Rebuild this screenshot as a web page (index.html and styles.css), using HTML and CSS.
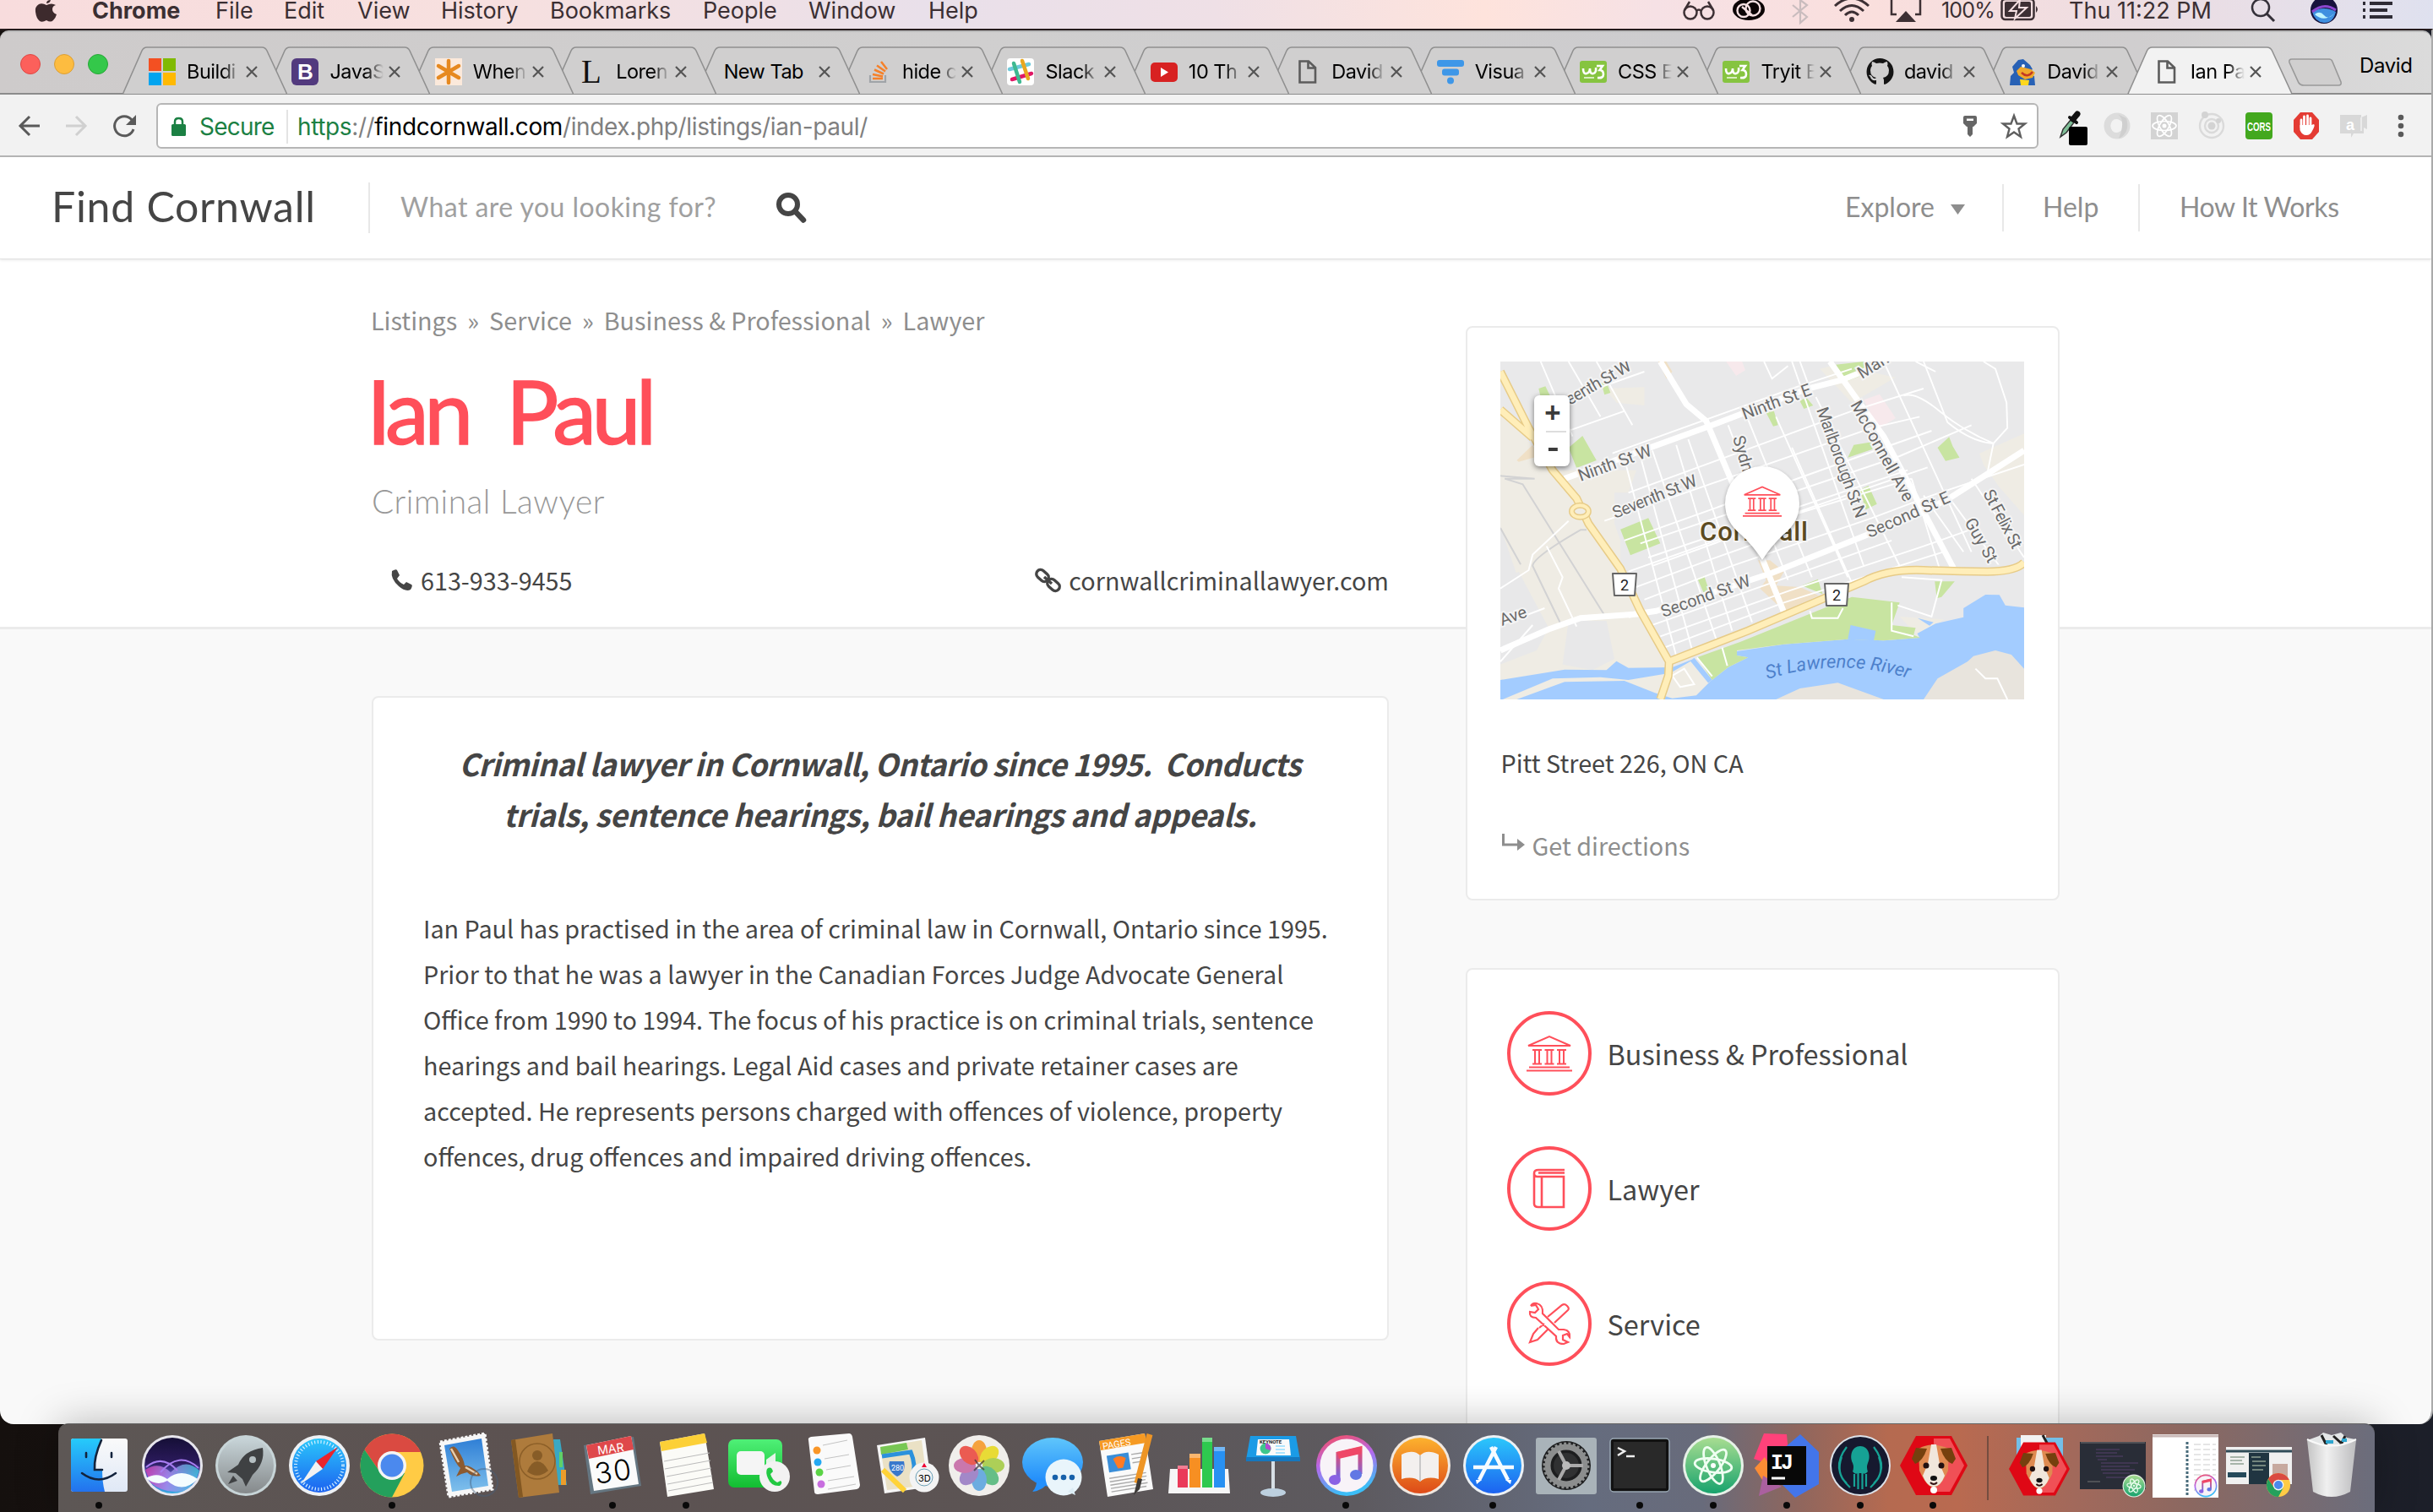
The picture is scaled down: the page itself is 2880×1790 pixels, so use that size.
FILE: index.html
```html
<!DOCTYPE html>
<html lang="en">
<head>
<meta charset="utf-8">
<title>Ian Paul</title>
<link rel="stylesheet" href="styles.css">
</head>
<body>
<svg class="defs" width="0" height="0">
  <defs>
    <symbol id="tab" viewBox="0 0 195 57"><path d="M.5 56 23 5Q25 1 29 1H165Q169 1 171 5L194.5 56" stroke="#909090" stroke-width="1.6"/></symbol>
    <symbol id="x" viewBox="0 0 16 16"><path d="M2 2 14 14M14 2 2 14" stroke="#555" stroke-width="2.2" fill="none"/></symbol>
    <symbol id="doc" viewBox="0 0 32 32"><path d="M7.500 3.500H18L26 11V28.500H7.500zM17.500 4V11.500H25.500" fill="none" stroke="#5c5c5c" stroke-width="2.600"/></symbol>
    <symbol id="w3" viewBox="0 0 32 32"><rect y="3" width="32" height="26" rx="3" fill="#86c440"/><path d="M4 12Q4 19 8 18T12 12Q12 19 16 18T19 11" fill="none" stroke="#fff" stroke-width="2.600"/><path d="M20 9H27L23.500 14Q28 14 28 19T21 23" fill="none" stroke="#fff" stroke-width="2.600"/><path d="M5 23H17" stroke="#d7edbd" stroke-width="2"/></symbol>
    <symbol id="bank" viewBox="0 0 54 44"><path d="M2 13 27 2 52 13zM3 38.500H51M0 42.500H54M7 18H18M21.500 18H32.500M36 18H47M7 34.500H18M21.500 34.500H32.500M36 34.500H47M10 18V34M15 18V34M24.500 18V34M29.500 18V34M39 18V34M44 18V34" fill="none" stroke="#ff4f5a" stroke-width="2"/></symbol>
    <symbol id="chrome" viewBox="-40 -40 80 80"><circle r="37.500" fill="#ffcb45"/><path d="M-32.500-18.700A37.500 37.500 0 0 1 34-16H0L-14 8z" fill="#da4a41"/><path d="M-32.500-18.700A37.500 37.500 0 0 0 0 37.500L15 9-14 8z" fill="#24a05c"/><circle r="17" fill="#f5f5f5"/><circle r="13.500" fill="#4b89ee"/></symbol>
    <symbol id="itunes" viewBox="-40 -40 80 80"><circle r="36" fill="url(#itg)"/><circle r="31.500" fill="#f8f3f8"/><path d="M-10 16V-14L16-20V10" fill="none" stroke="url(#notes)" stroke-width="5"/><path d="M-10-12 16-18" stroke="#ef4767" stroke-width="8"/><ellipse cx="-14" cy="17" rx="7" ry="6" fill="#8a62e4"/><ellipse cx="11" cy="11" rx="7" ry="6" fill="#6277e4"/></symbol>
    <symbol id="atom" viewBox="-40 -40 80 80"><circle r="36" fill="#e7f1e8"/><circle r="33" fill="url(#atg)"/><g fill="none" stroke="#effff2" stroke-width="2.800"><ellipse rx="8" ry="23" transform="rotate(-22)"/><ellipse rx="8" ry="23" transform="rotate(38)"/><ellipse rx="8" ry="22" transform="rotate(98)"/></g><circle r="3" fill="#fff"/></symbol>
    <symbol id="dog" viewBox="-40 -40 80 80"><path d="M-21-35H21L40 0 21 35H-21L-40 0z" fill="#df0815"/><path d="M0-32H19L36 0 19 31H0z" fill="#f05056"/><path d="M-18-20Q-3-29 18-20L17 6Q8 26 0 26T-17 6z" fill="#df8a51"/><path d="M-3-25H3L7-2 13 12Q8 25 0 25T-13 12L-7-2z" fill="#f1e7dc"/><path d="M-21-21-8-20Q-13-5-22-2L-26-8zM21-21 8-20Q13-5 22-2L26-8z" fill="#75400e"/><circle cx="-9" cy="0" r="3.500" fill="#211"/><circle cx="9" cy="0" r="3.500" fill="#211"/><ellipse cy="15" rx="4" ry="3" fill="#111"/><path d="M-4 20Q0 24 4 20" stroke="#311" fill="none" stroke-width="2"/><circle cy="29" r="4" fill="#fff"/></symbol>
    <linearGradient id="itg" x1="0" y1="0" x2=".3" y2="1"><stop stop-color="#fb4b55"/><stop offset=".5" stop-color="#b569ed"/><stop offset="1" stop-color="#3bbef7"/></linearGradient>
    <linearGradient id="notes" x1="0" y1="0" x2="0" y2="1"><stop stop-color="#f24963"/><stop offset="1" stop-color="#7068e6"/></linearGradient>
    <linearGradient id="atg" x1="0" y1="0" x2="0" y2="1"><stop stop-color="#a8dd91"/><stop offset="1" stop-color="#18a36d"/></linearGradient>
    <linearGradient id="fin" x1="0" y1="0" x2="0" y2="1"><stop stop-color="#26cbfb"/><stop offset="1" stop-color="#2372ee"/></linearGradient>
    <linearGradient id="finr" x1="0" y1="0" x2="0" y2="1"><stop stop-color="#fafafa"/><stop offset="1" stop-color="#dfe8f6"/></linearGradient>
    <linearGradient id="siri" x1="0" y1="0" x2="0" y2="1"><stop stop-color="#150f36"/><stop offset=".45" stop-color="#2b1a5c"/><stop offset=".7" stop-color="#5b5fd0"/><stop offset="1" stop-color="#35a9df"/></linearGradient>
    <linearGradient id="wave" x1="0" y1="0" x2="1" y2="0"><stop stop-color="#e23fb4"/><stop offset=".4" stop-color="#b48af0"/><stop offset="1" stop-color="#3cd3e0"/></linearGradient>
    <linearGradient id="grey" x1="0" y1="0" x2="0" y2="1"><stop stop-color="#c8d5d9"/><stop offset="1" stop-color="#85898b"/></linearGradient>
    <linearGradient id="blue" x1="0" y1="0" x2="0" y2="1"><stop stop-color="#2bc7fb"/><stop offset="1" stop-color="#1c62f0"/></linearGradient>
    <linearGradient id="msg" x1="0" y1="0" x2="0" y2="1"><stop stop-color="#5fc6fb"/><stop offset="1" stop-color="#1a86fb"/></linearGradient>
    <linearGradient id="sky" x1="0" y1="0" x2="0" y2="1"><stop stop-color="#2f7fd6"/><stop offset="1" stop-color="#7fc0ec"/></linearGradient>
    <linearGradient id="orange" x1="0" y1="0" x2="0" y2="1"><stop stop-color="#fdb22e"/><stop offset="1" stop-color="#dd4a18"/></linearGradient>
    <linearGradient id="green" x1="0" y1="0" x2="0" y2="1"><stop stop-color="#4ff077"/><stop offset="1" stop-color="#12bd31"/></linearGradient>
    <linearGradient id="trash" x1="0" y1="0" x2="1" y2="0"><stop stop-color="#c4c4c4"/><stop offset=".4" stop-color="#f0f0f0"/><stop offset="1" stop-color="#bdbdbf"/></linearGradient>
  </defs>
</svg>

<header class="menubar">
  <svg class="apple" width="28" height="30" viewBox="0 0 28 30"><path d="M19 0Q14 0 14 4 18 4 19 0M14 6Q9 3 5 5 0 8 1 14 2 22 6 25 9 27 14 24 19 27 22 24 25 21 26 17 21 15 21 11T25 6Q20 3 14 6" fill="#3d2a2d"/></svg>
  <nav class="menus"><b class="m1">Chrome</b><span class="m2">File</span><span class="m3">Edit</span><span class="m4">View</span><span class="m5">History</span><span class="m6">Bookmarks</span><span class="m7">People</span><span class="m8">Window</span><span class="m9">Help</span></nav>
  <div class="status">
    <svg class="s-glasses" width="40" height="34" viewBox="0 0 40 34"><g fill="none" stroke="#3d3034" stroke-width="2.500"><circle cx="10" cy="15" r="7.500"/><circle cx="30" cy="15" r="7.500"/><path d="M17 13Q20 10 23 13M3 12 9 2M37 12 31 2"/></g></svg>
    <svg class="s-cc" width="40" height="34" viewBox="0 0 40 34"><ellipse cx="20" cy="11" rx="19" ry="13" fill="#0c0405"/><g fill="none" stroke="#f6e0e2" stroke-width="2.400"><circle cx="14" cy="12.500" r="7.500"/><circle cx="25" cy="10" r="8.500"/><path d="M12 8 24 18"/></g></svg>
    <svg class="s-bt" width="22" height="34" viewBox="0 0 22 34"><path d="M2 6 19 20 11 27V0L19 6 2 20" fill="none" stroke="#c9bcbe" stroke-width="2.200"/></svg>
    <svg class="s-wifi" width="44" height="34" viewBox="0 0 44 34"><g fill="none" stroke="#3d3034" stroke-width="3"><path d="M2 7Q22-11 42 7M8 13Q22 0 36 13M14 18Q22 10 30 18"/></g><circle cx="22" cy="23" r="3" fill="#3d3034"/></svg>
    <svg class="s-air" width="38" height="34" viewBox="0 0 38 34"><path d="M8 17H2V0M30 17H36V0" fill="none" stroke="#3d3034" stroke-width="2.500"/><path d="M19 13 31 26H7z" fill="#3d3034"/></svg>
    <span class="s-pct">100%</span>
    <svg class="s-bat" width="46" height="34" viewBox="0 0 46 34"><rect x="1.500" y="-1" width="38" height="24" rx="4" fill="none" stroke="#3d3034" stroke-width="2.500"/><rect x="5" y="2" width="31" height="18" rx="2" fill="#3d3034"/><path d="M23 0 11 13H19L17 22 31 9H22z" fill="#3d3034" stroke="#f6e1e3" stroke-width="2"/><path d="M42 7Q46 11 42 15z" fill="#3d3034"/></svg>
    <span class="s-time">Thu 11:22 PM</span>
    <svg class="s-find" width="30" height="34" viewBox="0 0 30 34"><circle cx="12" cy="9" r="10" fill="none" stroke="#343039" stroke-width="2.500"/><path d="M19 16 28 25" stroke="#343039" stroke-width="3"/></svg>
    <svg class="s-siri" width="34" height="34" viewBox="0 0 34 34"><circle cx="17" cy="12" r="16" fill="#17123c"/><path d="M3 14Q17 6 31 14 28 27 17 27 6 26 3 14" fill="#3f8fe0"/><path d="M3 14Q17 2 31 12" stroke="#8b46cd" stroke-width="3" fill="none"/><path d="M6 17Q12 12 17 18T29 16Q17 27 6 17" fill="#bff4ff"/></svg>
    <svg class="s-list" width="38" height="34" viewBox="0 0 38 34"><path d="M2 4H5M10 4H37M2 12H5M10 12H31M2 20H5M10 20H37" stroke="#2e2b35" stroke-width="4"/></svg>
  </div>
</header>

<div class="window">
  <div class="tabstrip">
    <div class="lights"><i class="red"></i><i class="yellow"></i><i class="green"></i></div>
    <div class="tabs">
      <div class="tab"><svg class="shape"><use href="#tab"/></svg><svg class="fav" viewBox="0 0 32 32"><path d="M0 0H15V15H0z" fill="#f35022"/><path d="M17 0H32V15H17z" fill="#80ba02"/><path d="M0 17H15V32H0z" fill="#02a4ef"/><path d="M17 17H32V32H17z" fill="#ffb902"/></svg><span>Buildi</span><svg class="close"><use href="#x"/></svg></div>
      <div class="tab"><svg class="shape"><use href="#tab"/></svg><svg class="fav" viewBox="0 0 32 32"><rect width="32" height="32" rx="6" fill="#523a7e"/><text x="7" y="25" font-family="Liberation Sans" font-weight="700" font-size="26" fill="#fff">B</text></svg><span>JavaS</span><svg class="close"><use href="#x"/></svg></div>
      <div class="tab"><svg class="shape"><use href="#tab"/></svg><svg class="fav" viewBox="0 0 32 32"><rect width="32" height="32" fill="#fbe9db"/><path d="M16 3V29M4 9 28 23M28 9 4 23" stroke="#e68920" stroke-width="4.500" stroke-linecap="round"/></svg><span>When</span><svg class="close"><use href="#x"/></svg></div>
      <div class="tab"><svg class="shape"><use href="#tab"/></svg><svg class="fav" viewBox="0 0 32 32"><text x="4" y="29" font-family="Liberation Serif" font-size="39" fill="#111">L</text></svg><span>Loren</span><svg class="close"><use href="#x"/></svg></div>
      <div class="tab newtab"><svg class="shape"><use href="#tab"/></svg><span>New Tab</span><svg class="close"><use href="#x"/></svg></div>
      <div class="tab"><svg class="shape"><use href="#tab"/></svg><svg class="fav" viewBox="0 0 32 32"><path d="M7 20V28H25V20" fill="none" stroke="#a0a4a8" stroke-width="2.200"/><path d="M10 24H22M10 19 22 21.500M12 13.500 23 18.500M15 8.500 25 15.500M20 4 27 13" stroke="#f5812a" stroke-width="2.500"/></svg><span>hide c</span><svg class="close"><use href="#x"/></svg></div>
      <div class="tab"><svg class="shape"><use href="#tab"/></svg><svg class="fav" viewBox="0 0 32 32"><rect width="32" height="32" rx="4" fill="#fff"/><g stroke-width="4.500" stroke-linecap="round"><path d="M3 13 26 7" stroke="#6ecadc"/><path d="M6 25 29 18" stroke="#e01765"/><path d="M8 6 15 28" stroke="#3eb991"/><path d="M18 3 25 24" stroke="#e9a820"/></g></svg><span>Slack</span><svg class="close"><use href="#x"/></svg></div>
      <div class="tab"><svg class="shape"><use href="#tab"/></svg><svg class="fav" viewBox="0 0 32 32"><rect y="5" width="32" height="23" rx="5" fill="#d82222"/><path d="M12 11 21 16.500 12 22z" fill="#fff"/></svg><span>10 Th</span><svg class="close"><use href="#x"/></svg></div>
      <div class="tab"><svg class="shape"><use href="#tab"/></svg><svg class="fav"><use href="#doc"/></svg><span>David</span><svg class="close"><use href="#x"/></svg></div>
      <div class="tab"><svg class="shape"><use href="#tab"/></svg><svg class="fav" viewBox="0 0 32 32"><rect y="2" width="32" height="8" rx="3" fill="#3e97e8"/><rect x="6" y="12.500" width="20" height="8" rx="3" fill="#3e97e8"/><circle cx="16" cy="26.500" r="4" fill="#3e97e8"/></svg><span>Visua</span><svg class="close"><use href="#x"/></svg></div>
      <div class="tab"><svg class="shape"><use href="#tab"/></svg><svg class="fav"><use href="#w3"/></svg><span>CSS E</span><svg class="close"><use href="#x"/></svg></div>
      <div class="tab"><svg class="shape"><use href="#tab"/></svg><svg class="fav"><use href="#w3"/></svg><span>Tryit E</span><svg class="close"><use href="#x"/></svg></div>
      <div class="tab"><svg class="shape"><use href="#tab"/></svg><svg class="fav" viewBox="0 0 32 32"><path d="M16 0A16 16 0 0 0 11 31Q12 31 12 29V26Q6 27 5 22L3 20Q6 19 8 23 10 25 12 23 5 22 5 14 5 11 7 9 6 7 7 4 9 4 12 6 16 5 20 6 23 4 25 4 26 7 25 9 27 11 27 14 27 22 20 23 21 25 21 26V30Q21 31 22 31A16 16 0 0 0 16 0" fill="#141414"/></svg><span>david</span><svg class="close"><use href="#x"/></svg></div>
      <div class="tab"><svg class="shape"><use href="#tab"/></svg><svg class="fav" viewBox="0 0 32 32"><path d="M11 2 17 1 25 8 28 13 23 16 17 17 30 21 31 32H1L2 21 6 17 4 10z" fill="#2861b5"/><path d="M14 10 26 13 31 17 28 23 19 25 11 20 9 15z" fill="#f0a92c"/><path d="M15 17Q22 24 28 16" stroke="#c33824" stroke-width="2.500" fill="none"/><path d="M13 25 24 26 23 32H14z" fill="#ffd71d"/><circle cx="17" cy="9" r="2" fill="#fff"/></svg><span>David</span><svg class="close"><use href="#x"/></svg></div>
      <div class="tab active"><svg class="shape"><use href="#tab"/></svg><svg class="fav"><use href="#doc"/></svg><span>Ian Pa</span><svg class="close"><use href="#x"/></svg></div>
    </div>
    <svg class="add" width="68" height="36" viewBox="0 0 68 36"><path d="M6 2H50Q53 2 54 5L64 29Q65 33 61 33H20Q16 33 14 30L3 6Q2 2 6 2" fill="#d0cfcf" stroke="#999" stroke-width="1.600"/></svg>
    <span class="profile">David</span>
  </div>
  <div class="toolbar">
    <svg width="172" height="56" viewBox="0 0 172 56" fill="none" stroke-width="3"><path d="M47 27H24M35 16 24 27 35 38" stroke="#5a5a5a"/><path d="M78 27H101M90 16 101 27 90 38" stroke="#d0d0d0"/><path d="M156 20A11.500 11.500 0 1 0 158 31" stroke="#5a5a5a"/><path d="M161 14V26H149z" fill="#5a5a5a"/></svg>
    <div class="omnibox">
      <svg width="17" height="24" viewBox="0 0 17 24"><rect y="9" width="17" height="14" rx="1.500" fill="#1b8043"/><path d="M4 10V6Q4 2 8.500 2T13 6V10" fill="none" stroke="#1b8043" stroke-width="2.500"/></svg>
      <span class="secure">Secure</span><i class="sep"></i>
      <span class="url"><em class="https">https</em>://<em class="host">findcornwall.com</em>/index.php/listings/ian-paul/</span>
      <svg class="key" width="18" height="28" viewBox="0 0 18 28"><path d="M1 3Q1 1 3 1H15Q17 1 17 3V10L13 14H12V23L9 26 6 23V14H5L1 10z" fill="#666"/><path d="M5 4.500H13V7H5z" fill="#fff"/></svg>
      <svg class="star" width="30" height="30" viewBox="0 0 30 30"><path d="M15 2 18.500 11.500H28L20.500 17.500 23 27 15 21.500 7 27 9.500 17.500 2 11.500H11.500z" fill="none" stroke="#5f5f5f" stroke-width="2.400"/></svg>
    </div>
    <div class="exts">
      <svg viewBox="0 0 40 44"><path d="M9 33 12 24 21 13 25 16 16 28z" fill="#7fbf98" stroke="#333" stroke-width="1.500"/><path d="M20 10 28 16" stroke="#111" stroke-width="4" stroke-linecap="round"/><path d="M24 12 29 6" stroke="#111" stroke-width="7" stroke-linecap="round"/><rect x="19" y="21" width="22" height="22" rx="2" fill="#000"/></svg>
      <svg viewBox="0 0 40 44"><circle cx="20" cy="20" r="11.500" fill="none" stroke="#dcdcdc" stroke-width="8"/><path d="M18 5Q32 10 22 35 36 28 31 11z" fill="#cfcfcf"/><ellipse cx="19" cy="20" rx="6.500" ry="8" fill="#f2f2f2"/></svg>
      <svg viewBox="0 0 40 44"><rect x="4" y="4" width="32" height="32" fill="#d3d3d3"/><g fill="none" stroke="#fff" stroke-width="1.700"><ellipse cx="20" cy="20" rx="14" ry="5.500"/><ellipse cx="20" cy="20" rx="14" ry="5.500" transform="rotate(60 20 20)"/><ellipse cx="20" cy="20" rx="14" ry="5.500" transform="rotate(120 20 20)"/></g><circle cx="20" cy="20" r="2.500" fill="#fff"/></svg>
      <svg viewBox="0 0 40 44"><g fill="none" stroke="#dadada" stroke-width="2.400"><circle cx="20" cy="20" r="14"/><circle cx="20" cy="20" r="8"/></g><circle cx="20" cy="20" r="4.500" fill="#d3d3d3"/><circle cx="12" cy="7" r="4" fill="#d3d3d3"/><circle cx="28" cy="14" r="3" fill="#d3d3d3"/></svg>
      <svg viewBox="0 0 40 44"><rect x="4" y="4" width="32" height="32" rx="4" fill="#43a81e"/><text x="6" y="25.500" font-family="Liberation Sans" font-weight="700" font-size="15" textLength="28" lengthAdjust="spacingAndGlyphs" fill="#fff">CORS</text></svg>
      <svg viewBox="0 0 40 44"><path d="M13 4H27L35 13V27L27 36H13L5 27V13z" fill="#e43b33"/><path d="M14 22V13M17.500 21V9M21.500 21V8M25 21V11" stroke="#fff" stroke-width="2.800" stroke-linecap="round"/><path d="M12.500 19H26L29 18Q31 19 27 26 25 31 20 31T12.500 25z" fill="#fff"/></svg>
      <svg viewBox="0 0 40 44"><path d="M4 7H29V10L36 7V24L32 22V29H20L17 34V29H4z" fill="#d8d8d8"/><path d="M29 10V26" stroke="#f2f2f2" stroke-width="1.500"/><text x="11" y="25" font-family="Liberation Sans" font-weight="700" font-size="18" fill="#fff">a</text></svg>
    </div>
    <svg class="dots" width="8" height="28" viewBox="0 0 8 28" fill="#5a5a5a"><circle cx="4" cy="4" r="3.300"/><circle cx="4" cy="14" r="3.300"/><circle cx="4" cy="24" r="3.300"/></svg>
  </div>

  <div class="site">
    <div class="sitebar">
      <div class="logo">Find Cornwall</div>
      <div class="search"><span>What are you looking for?</span><svg width="37" height="38" viewBox="0 0 37 38"><circle cx="15" cy="15" r="11" fill="none" stroke="#454545" stroke-width="6"/><path d="M23 23 33 33.500" stroke="#454545" stroke-width="6.500" stroke-linecap="round"/></svg></div>
      <nav class="sitenav"><span class="explore">Explore</span><svg width="17" height="12" viewBox="0 0 17 12"><path d="M0 0H17L8.500 12z" fill="#8e8e8e"/></svg><i></i><span class="help">Help</span><i></i><span class="how">How It Works</span></nav>
    </div>
    <div class="columns">
      <main>
        <nav class="crumbs"><span>Listings</span><b>»</b><span>Service</span><b>»</b><span>Business &amp; Professional</span><b>»</b><span>Lawyer</span></nav>
        <h1>Ian Paul</h1>
        <p class="tagline">Criminal Lawyer</p>
        <div class="contact">
          <div><svg width="27" height="27" viewBox="0 0 27 27"><path d="M2 3Q7 0 8 2L11 8 8 12Q11 17 16 19L19 16 25 19Q27 20 24 25 18 28 10 21 0 12 2 3" fill="#454545"/></svg><span class="phone">613-933-9455</span></div>
          <div><svg class="chain" width="31" height="30" viewBox="0 0 31 30" fill="none" stroke="#454545" stroke-width="3.400"><rect x="1" y="4.500" width="16" height="10" rx="5" transform="rotate(42 9 9.500)"/><rect x="14" y="15.500" width="16" height="10" rx="5" transform="rotate(42 22 20.500)"/><path d="M11 11 20 19"/></svg><span class="web">cornwallcriminallawyer.com</span></div>
        </div>
        <article class="card about">
          <h2>Criminal lawyer in Cornwall, Ontario since 1995.&nbsp; Conducts<br><span class="second">trials, sentence hearings, bail hearings and appeals.</span></h2>
          <p>Ian Paul has practised in the area of criminal law in Cornwall, Ontario since 1995.<br>Prior to that he was a lawyer in the Canadian Forces Judge Advocate General<br>Office from 1990 to 1994. The focus of his practice is on criminal trials, sentence<br>hearings and bail hearings. Legal Aid cases and private retainer cases are<br>accepted. He represents persons charged with offences of violence, property<br>offences, drug offences and impaired driving offences.</p>
        </article>
      </main>
      <aside>
        <section class="card place">
          <div class="map">
            <svg width="620" height="400" viewBox="0 0 620 400">
              <defs><clipPath id="town"><path d="M150 174H1432V890L1250 905 1100 920 550 1225 470 1060 335 740 250 560 200 440z"/></clipPath></defs>
              <rect width="620" height="400" fill="#e9e9ea"/>
              <g class="geo" transform="scale(.4722 .3333) translate(-119 -174)">
                <g fill="#efece4"><path d="M119 340 250 560H460L440 640H405V750L420 810V910L540 1240V1374H119zM1320 500 1432 430V720L1370 620 1330 540zM920 200 960 185 1110 230 1000 320zM1120 1080 1230 1090 1170 1155zM380 270 480 265V330L410 320z"/></g>
                <path d="M119 960 165 920 240 1120 210 1200 119 1250zM290 1095H385L405 1230 350 1270 275 1250zM119 760 160 930 119 980z" fill="#e8e8e9"/>
                <path d="M119 1305 280 1268 385 1270 410 1238 440 1262 550 1260 600 1232 645 1310 690 1260 740 1225 712 1218 712 1203 830 1178 990 1160 1080 1165 1170 1155 1164 1140 1210 1105 1280 1082 1280 1050 1335 1002 1370 1003 1385 1040 1432 1048V1374H119z" fill="#a3ccff"/>
                <path d="M125 1374 250 1300 370 1295 440 1305 545 1280 600 1235 645 1310 610 1360 550 1370 505 1350 430 1308 280 1312 160 1374z" fill="#efece4"/>
                <path d="M600 1232 645 1310" fill="none" stroke="#a3ccff" stroke-width="6"/>
                <path d="M612 1225 720 1170 930 1050 1000 1010 1120 1030 1100 1110 1160 1120 1155 1145 1172 1155 1080 1165 990 1160 830 1178 712 1200V1218L740 1225 690 1260 650 1305zM420 770 490 730 520 820 445 862zM290 480 325 438 360 525 310 552zM960 185 1030 174 1040 215 985 245zM870 315 885 300 903 330 880 342zM785 355 805 350 815 400 803 404zM990 515 1005 470 1050 460 1052 485zM1020 630 1042 615 1063 680 1035 700zM1215 480 1244 442 1253 475 1270 515 1235 527zM613 945 630 935 645 1000 630 1000zM875 970 915 947 927 1000zM1208 955H1258L1225 1010 1213 1015zM215 270 232 262 245 300H220zM372 250 385 245 395 285 380 292z" fill="#c8e4a1"/>
                <path d="M990 1160 997 1110 1060 1130 1055 1165zM1165 1085 1205 1100 1195 1112z" fill="#a3ccff"/>
                <path d="M1180 1374 1215 1300 1290 1240 1305 1220 1360 1200 1400 1215 1432 1265V1374zM810 1374 870 1335 965 1315 1080 1374z" fill="#e8e4dd"/>
                <path d="M1030 310 1070 290 1110 375 1065 415zM685 174H725L733 205 710 225z" fill="#f7e9ec"/>
                <path d="M765 880H795L830 920 810 970 870 975 917 1005 830 1060 770 980 785 950zM160 525 200 470 215 510 165 530zM515 174H535L550 210 535 235z" fill="#f0e0c6"/>
                <g fill="none" stroke="#d2d2d3" stroke-width="2"><path d="M119 580 205 590 130 590 175 610 380 1075M119 765 170 895M270 1105 200 900Q200 870 320 772H335"/></g>
                <g clip-path="url(#town)" fill="none" stroke="#fff" stroke-width="1.900">
                  <path d="M190 470 430 350M240 330 480 210M400 500 860 265 1000 200M440 640 1000 350 1180 270M380 740 1050 410 1170 370M430 810 1080 480 1200 420M470 820 1120 510 1300 400M490 870 1140 560M500 900 850 720 1150 590M440 920 800 740 1190 550M450 980 640 880 860 770M480 1020 700 900 1050 730 1200 650 1432 540M500 1110 800 960 1100 810M520 1150 840 990 1180 830 1300 770M530 1190 830 1030 1230 850"/>
                  <path d="M220 174 300 440M290 174 370 370M360 174 450 400M430 520 560 1220M470 510 600 1200M500 490 660 1160M560 470 700 1130M590 450 750 1100M690 400 840 950M740 380 900 940M810 370 990 940M850 480 1000 960M850 174 1030 900M910 300 1120 900M1080 174 1300 850M1150 590 1220 910M1180 650 1280 850M1240 650 1370 900M1300 590 1432 870M1210 210 1160 174M870 174 900 290M780 174 800 235 840 190"/>
                  <path d="M1180 174 1240 390Q1300 460 1355 465L1390 410 1388 320 1360 200 1330 174M1130 295Q1160 280 1220 350T1355 465L1340 570"/>
                </g>
                <g fill="none" stroke="#fff" stroke-width="2"><path d="M895 1060 900 1085 965 1085 978 1050M1100 1030V1130L1155 1150M612 1225 650 1292M675 1190 688 1255M1125 940 1225 950 1200 1080 1115 1040M550 1290 580 1265 605 1320 570 1330zM1310 1265 1335 1300 1365 1300 1390 1374M119 980 190 915 200 860 290 740M235 830 275 940 265 980 310 1115M119 1110 230 1050M119 1240 200 1110"/></g>
                <g fill="none" stroke="#fff" stroke-width="7"><path d="M520 174 585 325 635 385 705 620 780 890 830 1065M280 590 640 405 890 270 975 240 1090 174M945 174 1080 440 1255 908M440 1075 510 1060 800 925 1170 715 1250 655 1432 490M119 1200 240 1125 320 1085 470 1070"/></g>
                <g fill="none" stroke="#e7cb87" stroke-width="10"><path id="hw" d="M119 210 190 410 250 560 310 660 340 750 420 910 470 1060 542 1240 540 1290 520 1374M119 345 200 445M545 1238 740 1130 1030 955Q1090 910 1180 915T1340 920 1432 888"/></g>
                <g fill="none" stroke="#ffeeb9" stroke-width="7"><use href="#hw"/></g>
                <circle cx="319" cy="706" r="21" fill="#efece4" stroke="#e7cb87" stroke-width="7"/><circle cx="319" cy="706" r="21" fill="none" stroke="#ffeeb9" stroke-width="4"/>
              </g>
              <g class="streets">
                <text transform="translate(82 52) rotate(-30)" textLength="86">eenth St W</text>
                <text transform="translate(95 142) rotate(-20)" textLength="91">Ninth St W</text>
                <text transform="translate(289 69) rotate(-20.500)" textLength="86">Ninth St E</text>
                <text transform="translate(136 186) rotate(-22)" textLength="106">Seventh St W</text>
                <text transform="translate(193 303) rotate(-20)" textLength="111">Second St W</text>
                <text transform="translate(437 209) rotate(-24)" textLength="106">Second St E</text>
                <text transform="translate(428 21) rotate(-32)">Man</text>
                <text transform="translate(414 51) rotate(61)" textLength="133">McConnell Ave</text>
                <text transform="translate(374 57) rotate(70)" textLength="138">Marlborough St N</text>
                <text transform="translate(275 90) rotate(74)">Sydney</text>
                <text transform="translate(549 190) rotate(60)">Guy St</text>
                <text transform="translate(571 156) rotate(62)" textLength="76">St Felix St</text>
                <text transform="translate(2 313) rotate(-20)">Ave</text>
              </g>
              <path id="river" d="M316 376Q405 348 492 378" fill="none"/><text class="water"><textPath href="#river" textLength="170">St Lawrence River</textPath></text>
              <g fill="#fff" stroke="#666" stroke-width="2"><path id="shield" d="M133 251H161L159 277H135z" stroke-linejoin="round"/><use href="#shield" x="251" y="12"/></g>
              <g class="route"><text x="142" y="271">2</text><text x="393" y="283">2</text></g>
              <text class="city" x="236" y="212" textLength="128">Cornwall</text>
              <path class="pin" d="M310 235Q300 219 285 205 266 190 266 168A44 44 0 0 1 354 168Q354 190 335 205 320 219 310 235z" fill="#fff"/>
              <use href="#bank" x="287" y="145" width="46" height="41"/>
            </svg>
            <div class="zoomer"><b>+</b><i></i><b>-</b></div>
          </div>
          <p class="address">Pitt Street 226, ON CA</p>
          <p class="directions"><svg width="27" height="22" viewBox="0 0 27 22"><path d="M1.500 0V13H20" fill="none" stroke="#8e8e8e" stroke-width="3"/><path d="M18 6 27 13 18 20z" fill="#8e8e8e"/></svg><span>Get directions</span></p>
        </section>
        <section class="card cats">
          <div><i><svg width="54" height="48"><use href="#bank"/></svg></i><span>Business &amp; Professional</span></div>
          <div><i><svg width="40" height="50" viewBox="0 0 40 50"><path d="M38 3H7Q2 3 2 7V43Q2 47 7 47H37V11H6Q2 11 2 7M7 6.500H38M11 12V47" fill="none" stroke="#ff4f5a" stroke-width="2.600"/></svg></i><span>Lawyer</span></div>
          <div><i><svg width="52" height="52" viewBox="0 0 52 52" fill="none" stroke="#ff4f5a" stroke-width="2.200"><path d="M24 18 41 4Q44 2 47 5T48 10L32 25M14 31 20 26M25 32 12 45 3 48 7 38 13 31M4 5 10 4 13 9 9 13 3 12Q2 19 10 19L34 41Q33 50 43 50L48 48 42 45V40L47 38 50 42Q51 34 43 33L37 33 18 14Q19 4 11 2 6 1 4 5"/></svg></i><span>Service</span></div>
        </section>
      </aside>
    </div>
  </div>
</div>

<footer class="dock">
  <div class="app run"><svg viewBox="-40 -40 80 80"><rect x="-33" y="-32" width="67" height="63" rx="3" fill="url(#finr)"/><path d="M-30-32H3Q-5-12-4 4H4Q4 20 7 31H-30Q-33 31-33 28V-29Q-33-32-30-32" fill="url(#fin)"/><path d="M-15-15V-10M15-15V-10M-20 9Q0 24 20 9M3-30Q-6-10-5 5H4" fill="none" stroke="#13233c" stroke-width="2.600" stroke-linecap="round"/></svg></div>
  <div class="app"><svg viewBox="-40 -40 80 80"><circle r="36" fill="#e7e6ed"/><circle r="33" fill="url(#siri)"/><path d="M-32 5Q-16-6-2 8 16-10 32 6 28 22 14 30-10 34-26 20z" fill="url(#wave)" opacity=".75"/><path d="M-31 15Q-18 7-6 16 10 2 30 16 12 34-6 18-18 25-31 15" fill="#f4fdff"/><path d="M-31 2Q-12-14 6 6M-14 8Q8-18 31 3" stroke="#a77df0" stroke-width="2" fill="none"/></svg></div>
  <div class="app"><svg viewBox="-40 -40 80 80"><circle r="36" fill="#c7d4d7"/><circle r="33" fill="url(#grey)"/><path d="M20-21Q-2-18-9-1L-22 8-12 9-4 16 0 25 8 11Q23-3 20-21M-15 12-21 22-10 18z" fill="#3f4143"/><circle cx="8" cy="-7" r="4" fill="#b5bfc2"/></svg></div>
  <div class="app"><svg viewBox="-40 -40 80 80"><circle r="36" fill="#eef1f4"/><circle r="32" fill="url(#blue)"/><circle r="28" fill="none" stroke="#d4efff" stroke-width="4" stroke-dasharray="1.200 2.500"/><path d="M22-22-4-5 4 4z" fill="#e9252d"/><path d="M-22 22-4-5 4 4z" fill="#f2f2f2"/></svg></div>
  <div class="app run"><svg><use href="#chrome"/></svg></div>
  <div class="app"><svg viewBox="-40 -40 80 80"><path d="M-30-28 23-38 32 28-20 37z" fill="#f7f7f7" stroke="#f7f7f7" stroke-width="3" stroke-dasharray="3 2"/><path d="M-25-24 19-32 27 24-16 31z" fill="url(#sky)"/><path d="M-11 13-6 3Q-12-2-19-20-14-26-9-18-2-8-1 0 5-1 15 8L18 12Q8 14 2 8L-5 10z" fill="#8c5a30"/><path d="M-17-20-8-4M0 2 14 10" stroke="#e8cfae" stroke-width="2.500"/><circle cx="22" cy="20" r="16" fill="none" stroke="#47607a" stroke-width="2" opacity=".45"/></svg></div>
  <div class="app"><svg viewBox="-40 -40 80 80"><path d="M17-31H25L33 23H20z" fill="#39a8c3"/><path d="M24-16H28V2H24z" fill="#5fd168"/><path d="M26 5H32V23H26z" fill="#ec9c2a"/><path d="M-33-30 16-38 24 32-24 38z" fill="#ae7b3c"/><path d="M-33-30-28-31-19 37-24 38z" fill="#835822"/><circle cx="-2" cy="-5" r="21" fill="none" stroke="#8c5f28" stroke-width="1.500"/><circle cx="-2" cy="-12" r="6" fill="#875c27"/><path d="M-14 7Q-9-5-2-5T11 6Q-2 17-14 7" fill="#875c27"/></svg></div>
  <div class="app run"><svg viewBox="-40 -40 80 80"><path d="M-34-24 25-34 34 24-26 34z" fill="#657681"/><path d="M-31-24 22-35 31 22-22 30z" fill="#fbfbfb"/><path d="M-31-24 22-35 25-19-28-8z" fill="#df484b"/><g transform="rotate(-8)" font-family="Inter"><text x="-15" y="-15" font-size="14" fill="#fff">MAR</text><text x="-22" y="19" font-size="34" font-weight="300" textLength="43">30</text></g></svg></div>
  <div class="app run"><svg viewBox="-40 -40 80 80"><path d="M-31-28 22-38 33 28-22 37z" fill="#fbfbf7"/><path d="M-31-28 22-38 25-27-29-17z" fill="#fcd037"/><path d="M-26-5 28-15M-25 4 29-6M-23 13 30 3M-22 22 31 12M-21 30 32 20" stroke="#bbb" stroke-width="1"/></svg></div>
  <div class="app"><svg viewBox="-40 -40 80 80"><rect x="-37" y="-31" width="64" height="57" rx="7" fill="url(#green)"/><rect x="-27" y="-17" width="33" height="28" rx="5" fill="#f5f5f5"/><path d="M8-7 19-15V9L8 1z" fill="#e4f4e8"/><circle cx="18" cy="13" r="18" fill="#f2f2f2"/><path d="M9 4Q14 0 16 7L13 10Q15 17 21 20L25 18Q28 20 24 24 14 25 10 15 7 8 9 4" fill="#22c942"/></svg></div>
  <div class="app"><svg viewBox="-40 -40 80 80"><path d="M-29-30Q-30-33-26-34L19-38Q22-38 23-34L32 23Q32 27 28 28L-18 34Q-22 34-22 31z" fill="#fafafa"/><g stroke="#c4c4c4"><path d="M-12-24 17-30M-10-8 19-13M-8 5 21 0M-6 18 25 13M-6 28 27 22"/></g><circle cx="-19" cy="-18" r="4.500" fill="#f99627"/><circle cx="-18" cy="-4" r="4.500" fill="#23a8f3"/><circle cx="-16" cy="8" r="4.500" fill="#5bd445"/><circle cx="-14" cy="22" r="4.500" fill="#c86edf"/></svg></div>
  <div class="app"><svg viewBox="-40 -40 80 80"><path d="M-35-24 22-33 30 25-26 33z" fill="#f6f6f6"/><path d="M-31-22 18-30 25 23-23 29z" fill="#eae1c5"/><path d="M-31-22 0-27 2-19-30-13z" fill="#78c754"/><path d="M-29-11 5-16Q12 0 7 15" stroke="#2b91dc" stroke-width="5" fill="none"/><path d="M-28 5-2 30" stroke="#ffd338" stroke-width="6"/><path d="M-20-5H-3Q0 8-11 13-23 6-20-5" fill="#3978cc"/><text x="-18" y="6" font-family="Roboto" font-size="9" fill="#fff">280</text><circle cx="21" cy="14" r="17.500" fill="#f4f4f4"/><circle cx="21" cy="14" r="10" fill="none" stroke="#6a9fb5"/><text x="14" y="19" font-family="Inter" font-size="11">3D</text><path d="M21-3 24 2H18z" fill="#e03"/></svg></div>
  <div class="app"><svg viewBox="-40 -40 80 80"><circle r="36" fill="#f0eeeb"/><g opacity=".9"><ellipse cy="-17" rx="9" ry="13" fill="#f69a2c"/><ellipse cy="-17" rx="9" ry="13" fill="#e8d923" transform="rotate(45)"/><ellipse cy="-17" rx="9" ry="13" fill="#a6cc47" transform="rotate(90)"/><ellipse cy="-17" rx="9" ry="13" fill="#56b97d" transform="rotate(135)"/><ellipse cy="-17" rx="9" ry="13" fill="#5ea5df" transform="rotate(180)"/><ellipse cy="-17" rx="9" ry="13" fill="#9a7dc5" transform="rotate(225)"/><ellipse cy="-17" rx="9" ry="13" fill="#c66ba7" transform="rotate(270)"/><ellipse cy="-17" rx="9" ry="13" fill="#eb4c42" transform="rotate(315)"/></g><path d="M0 0-5-7M0 0 6-6M0 0 6 5M0 0-6 6" stroke="#3d3638" stroke-width="2" opacity=".7"/></svg></div>
  <div class="app"><svg viewBox="-40 -40 80 80"><ellipse cy="-4" rx="36" ry="29" fill="url(#msg)"/><path d="M-19 15Q-18 25-24 31-10 29-6 20z" fill="#2490fb"/><circle cx="13" cy="14" r="21.500" fill="#e9f5fb"/><path d="M18 31 27 35 24 26z" fill="#dbecf5"/><g fill="#1761aa"><circle cx="3" cy="14" r="3.300"/><circle cx="13" cy="14" r="3.300"/><circle cx="23" cy="14" r="3.300"/></g></svg></div>
  <div class="app"><svg viewBox="-40 -40 80 80"><path d="M-32-29 22-38 32 28-22 37z" fill="#fafafa"/><path d="M-32-29 22-38 24-27-30-18z" fill="#f69a23"/><g transform="rotate(-9)"><text x="-24" y="-23" font-family="Roboto" font-size="11" fill="#fff">PAGES</text><rect x="-21" y="-15" width="26" height="20" fill="#3a8ed8"/><path d="M-14-10Q-7-15 1-9L-4 2H-10z" fill="#ff7b23"/><path d="M-22 12H22M-22 16H22M-22 20H20M-22 24H22M-22 28H20M8-12H22M8-7H22M8-2H22" stroke="#aaa" stroke-width="1.400"/></g><path d="M28-37 13 21" stroke="#ee9525" stroke-width="7"/><path d="M14 15 9 35 16 28 19 16z" fill="#3d3a38"/></svg></div>
  <div class="app"><svg viewBox="-40 -40 80 80"><path d="M-35 4H34L36 33H-37z" fill="#f6f6f6"/><path d="M-26 0H-14V26H-26z" fill="#ea3a59"/><path d="M-12-14H1V26H-12z" fill="#f78f22"/><path d="M3-33H15V26H3z" fill="#2ec94f"/><path d="M17-22H30V26H17z" fill="#2891f2"/><path d="M-26 0H-14V4H-26zM-12-14H1V-9H-12zM3-33H15V-28H3zM17-22H30V-17H17z" fill="#fff" opacity=".35"/></svg></div>
  <div class="app"><svg viewBox="-40 -40 80 80"><path d="M-27-35H27L32-7H-32z" fill="#1b9be6"/><path d="M-32-10H32V-5H-32z" fill="#1677bd"/><path d="M-18-31H19L21-12H-20z" fill="#fafafa"/><text x="-16" y="-26" font-family="Roboto" font-weight="700" font-size="6" fill="#222">KEYNOTE</text><circle cx="-9" cy="-20" r="6.500" fill="#3ec68c"/><path d="M-9-20V-26.500A6.500 6.500 0 0 1-3-18z" fill="#b44bd1"/><path d="M3-23H14M3-19H14M3-15H14" stroke="#63cfff"/><path d="M0-5V30" stroke="#d7dfe5" stroke-width="4"/><ellipse cy="32" rx="15" ry="5" fill="#bdd0df"/></svg></div>
  <div class="app run"><svg><use href="#itunes"/></svg></div>
  <div class="app"><svg viewBox="-40 -40 80 80"><circle r="36" fill="#f0e8e0"/><circle r="33" fill="url(#orange)"/><path d="M-22-13Q-8-20 0-12 8-20 22-13V16Q8 12 0 19-8 12-22 16z" fill="#f3f0ee"/><path d="M0-12V19" stroke="#bbb" stroke-width="1.500"/></svg></div>
  <div class="app run"><svg viewBox="-40 -40 80 80"><circle r="36" fill="#edf1f4"/><circle r="33" fill="url(#blue)"/><path d="M-17 17 3-22M17 17-3-22M-24 2H24" stroke="#f5fbff" stroke-width="4.500"/><path d="M-21 17-14 17-20 22zM21 17 14 17 20 22z" fill="#fff"/></svg></div>
  <div class="app"><svg viewBox="-40 -40 80 80"><rect x="-36" y="-33" width="72" height="67" rx="3" fill="#a9b3b9"/><circle r="29" fill="#1d1e1f"/><circle r="22" fill="none" stroke="#8c8e8e" stroke-width="7"/><circle r="26" fill="none" stroke="#8c8e8e" stroke-width="3" stroke-dasharray="3 2.400"/><circle r="15" fill="#303132"/><path d="M0 0-9-17M0 0H20M0 0-9 17" stroke="#aaa" stroke-width="4"/><circle r="5" fill="#bbb"/></svg></div>
  <div class="app run"><svg viewBox="-40 -40 80 80"><rect x="-35" y="-32" width="70" height="63" rx="4" fill="#111" stroke="#9aa8b4" stroke-width="1.500"/><rect x="-31" y="-28" width="62" height="55" fill="#292929"/><path d="M-26-21-18-17-26-12M-16-11H-6" stroke="#eee" stroke-width="2.500" fill="none"/></svg></div>
  <div class="app run"><svg><use href="#atom"/></svg></div>
  <div class="app run"><svg viewBox="-40 -40 80 80"><path d="M-27-38 0-37 4 7-39-8z" fill="#ff427a"/><path d="M16-37 38-16V22L10 38-8 20-4-20z" fill="#4375ea"/><path d="M-38 3-26-10-10 20-29 17z" fill="#fb8c35"/><path d="M-28 12-33 36-6 25z" fill="#aa609f"/><rect x="-23" y="-23" width="46" height="46" fill="#080808"/><text x="-19" y="4" font-family="Liberation Mono" font-weight="700" font-size="25" fill="#fff" textLength="27">IJ</text><path d="M-18 15H-2" stroke="#fff" stroke-width="3"/></svg></div>
  <div class="app run"><svg viewBox="-40 -40 80 80"><circle r="36" fill="#dde2e9"/><circle r="34" fill="#16192f"/><path d="M0-23C10-23 13-11 9-3Q7 2 9 7 6 11 3 9H-3Q-6 11-9 7-7 2-9-3C-13-11-10-23 0-23" fill="#16a295"/><path d="M-7 10V25M-2.500 9V28M2.500 9V28M7 10V25M-16-22Q-36 4-12 26M16-22Q36 4 12 26M-22-10Q-29 10-16 21M22-10Q29 10 16 21" fill="none" stroke="#16a295" stroke-width="2.200"/></svg></div>
  <div class="app run"><svg><use href="#dog"/></svg></div>
  <i class="divider"></i>
  <div class="app"><svg viewBox="-40 -40 80 80"><rect x="-27" y="-33" width="55" height="40" fill="#73bfe8"/><rect x="-22" y="-36" width="30" height="30" fill="#f2f2f2"/><path d="M4-36 10-25" stroke="#222" stroke-width="3"/><use href="#dog" x="-37" y="-32" width="74" height="72"/></svg></div>
  <div class="app"><svg viewBox="-40 -40 80 80"><rect x="-39" y="-28" width="78" height="56" fill="#292d37"/><path d="M-20-19H8M-20-15H5M-20-11H12M-18-7H-7M-14-3H30M-14 1H20M-14 5H26M-12 9H20M-8 14H28" stroke="#694981" stroke-width="1.200" opacity=".7"/><path d="M-38-27H38M-30 19H-15" stroke="#777"/><use href="#atom" x="10" y="9" width="30" height="30"/></svg></div>
  <div class="app"><svg viewBox="-40 -40 80 80"><rect x="-39" y="-37" width="78" height="75" fill="#fff"/><path d="M2-28V37" stroke="#486b7a" stroke-width="3" stroke-dasharray="3 2"/><path d="M10-25H36M10-19H36M10-13H36M10-7H36M10-1H36M10 5H36M10 11H36M10 17H36M10 23H25M10 29H25" stroke="#ccc" stroke-dasharray="8 3"/><path d="M-39-35H39" stroke="#c9b9b8" stroke-width="3"/><use href="#itunes" x="9" y="9" width="30" height="30"/></svg></div>
  <div class="app"><svg viewBox="-40 -40 80 80"><rect x="-39" y="-22" width="78" height="44" fill="#f0f0f0"/><path d="M-39-17H39" stroke="#304c58" stroke-width="3"/><rect x="-12" y="-15" width="24" height="37" fill="#203541"/><path d="M-34-10H-17M-34-6H-20M-34-2H-18M-9-10H2M-8-5H8M-8 0H8M-8 5H5" stroke="#8fa092" stroke-width="1.500"/><rect x="-37" y="8" width="22" height="6" fill="#25495a"/><rect x="16" y="-2" width="18" height="18" fill="#c7a99f"/><use href="#chrome" x="8" y="8" width="30" height="30"/></svg></div>
  <div class="app"><svg viewBox="-40 -40 80 80"><path d="M-26-31-15-35-10-39 0-36 11-39 18-33 28-31V-22H-26z" fill="#e4e6e7"/><path d="M-12-36-5-22M2-35 13-25M16-35 10-23" stroke="#222" stroke-width="3"/><path d="M-7-28H2M12-30H18" stroke="#2fa6cf" stroke-width="4"/><path d="M-29-30Q0-18 29-30L22 31Q0 43-22 31z" fill="url(#trash)"/><path d="M-29-31Q0-16 29-31" fill="none" stroke="#f9f9f9" stroke-width="2"/></svg></div>
</footer>
</body>
</html>
```
FILE: styles.css
```css
* { box-sizing: border-box; }
body { margin: 0; width: 2880px; height: 1790px; overflow: hidden; display: flex; flex-direction: column; background: linear-gradient(90deg, #15100e, #2a2023 50%, #1c1f29); font-family: Inter, sans-serif; }
.defs { position: absolute; }
h1, h2, p { margin: 0; }
i, em { font-style: normal; }
svg { display: block; flex: none; overflow: visible; }

.menubar { height: 34px; flex: none; display: flex; padding-left: 41px; background: linear-gradient(90deg, #f8dcdd, #f7e0df 20%, #f1e0e4 29%, #e9e0ea 38%, #efe0e6 50%, #fee3dc 61%, #f6e1e5 68%, #fadfdd 77%, #eddde2 88%, #dfe1ef); color: #3b2f33; font-size: 27px; line-height: 25px; }
.menus { display: flex; width: 1900px; padding-left: 40px; white-space: nowrap; }
.m1 { width: 146px; } .m2 { width: 81px; } .m3 { width: 87px; } .m4 { width: 99px; } .m5 { width: 129px; } .m6 { width: 181px; } .m7 { width: 125px; } .m8 { width: 142px; }
.status { display: flex; padding-left: 22px; white-space: nowrap; }
.s-cc { margin-left: 19px; } .s-bt { margin-left: 30px; } .s-wifi { margin-left: 28px; } .s-air { margin-left: 23px; }
.s-pct { margin-left: 23px; width: 64px; font-size: 25px; letter-spacing: -.8px; } .s-bat { margin-left: 6px; } .s-time { margin-left: 35px; width: 178px; } .s-find { margin-left: 37px; } .s-siri { margin-left: 40px; } .s-list { margin-left: 27px; }

.window { height: 1652px; flex: none; display: flex; flex-direction: column; border-top: 2px solid #241a1b; border-right: 2px solid #aaa; border-radius: 0 0 16px 16px; overflow: hidden; }
.tabstrip { height: 76px; flex: none; display: flex; align-items: flex-end; background: linear-gradient(90deg, #cecbcb, #d0cfcf 40%, #cdccce 70%, #d0cecf 88%, #dbdbdb); border-top: 2px solid #b9b9b9; border-bottom: 2px solid #8c8c8c; border-radius: 10px 10px 0 0; }
.lights { display: flex; gap: 16px; width: 145px; padding: 0 0 22px 24px; }
.lights i { width: 24px; height: 24px; border-radius: 50%; background: #fc605b; border: 1px solid #df4744; }
.lights .yellow { background: #fdbc40; border-color: #dc9f34; }
.lights .green { background: #34c84a; border-color: #27a736; }
.tabs { display: flex; margin-bottom: -2px; }
.tab { position: relative; display: flex; align-items: center; width: 195px; height: 57px; margin-right: -25.600px; padding: 2px 32px 0 31px; font-size: 23.500px; letter-spacing: -.5px; color: #000; }
.tab .shape { position: absolute; inset: 0; width: 195px; height: 57px; fill: #d0cfcf; }
.tab .fav { position: relative; width: 32px; height: 32px; }
.tab span { position: relative; width: 64px; margin: 0 5px 0 13px; overflow: hidden; white-space: nowrap; -webkit-mask-image: linear-gradient(90deg, #000 68%, transparent); mask-image: linear-gradient(90deg, #000 68%, transparent); }
.newtab span { width: 102px; margin: 0 9px 0 3px; -webkit-mask-image: none; mask-image: none; }
.tab .close { position: relative; width: 16px; height: 16px; }
.tab:nth-child(1) { z-index: 15; } .tab:nth-child(2) { z-index: 14; } .tab:nth-child(3) { z-index: 13; } .tab:nth-child(4) { z-index: 12; } .tab:nth-child(5) { z-index: 11; } .tab:nth-child(6) { z-index: 10; } .tab:nth-child(7) { z-index: 9; } .tab:nth-child(8) { z-index: 8; } .tab:nth-child(9) { z-index: 7; } .tab:nth-child(10) { z-index: 6; } .tab:nth-child(11) { z-index: 5; } .tab:nth-child(12) { z-index: 4; } .tab:nth-child(13) { z-index: 3; } .tab:nth-child(14) { z-index: 2; }
.tab.active { z-index: 20; width: 198px; }
.tab.active .shape { fill: #f2f2f2; width: 198px; }
.add { margin: 0 0 6px 18px; }
.profile { margin: 0 0 17px 18px; font-size: 24px; line-height: 30px; letter-spacing: -.4px; }
.toolbar { height: 74px; flex: none; display: flex; align-items: center; padding-top: 1px; background: #f2f2f2; border-bottom: 2px solid #b4b4b4; }
.toolbar > svg:first-child { margin-top: 2px; }
.omnibox { display: flex; align-items: center; width: 2228px; height: 54px; margin-left: 13px; padding: 2px 0 0 16px; background: #fff; border: 2px solid #b6b6b6; border-radius: 6px; font-size: 28px; color: #808080; white-space: nowrap; }
.secure { width: 89px; margin-left: 16px; color: #1b8043; letter-spacing: -.8px; }
.sep { width: 2px; height: 40px; margin: 0 11px 0 14px; background: #e4e4e4; }
.url { width: 680px; letter-spacing: -.38px; }
.https { color: #1b8043; } .host { color: #000; }
.key { margin-left: auto; } .star { margin: 0 12px 0 28px; }
.exts { display: flex; gap: 16px; margin-left: 17px; }
.exts svg { width: 40px; height: 44px; margin-top: 4px; }
.dots { margin-left: 32px; }

.site { flex: 1; background: linear-gradient(#fff 556px, #ebebeb 556px, #ebebeb 559px, #f9f9f9 559px); overflow: hidden; color: #454545; }
.sitebar { position: relative; display: flex; align-items: center; height: 121px; background: #fff; border-bottom: 1px solid #e2e2e2; box-shadow: 0 1px 3px rgba(0,0,0,.1); font-family: Lato, sans-serif; font-size: 32px; white-space: nowrap; }
.logo { width: 375px; margin-left: 61px; padding-bottom: 5px; font-size: 50px; font-weight: 400; letter-spacing: .7px; }
.search { display: flex; align-items: center; height: 60px; padding-left: 36px; border-left: 2px solid #e8e8e8; color: #a0a0a0; }
.search span { width: 444px; padding-bottom: 4px; letter-spacing: .45px; }
.sitenav { display: flex; align-items: center; margin-left: auto; padding-right: 108px; color: #8e8e8e; }
.sitenav span { padding-bottom: 4px; }
.sitenav svg { margin: 3px 44px 0 21px; }
.sitenav i { width: 2px; height: 56px; background: #e8e8e8; }
.explore { width: 104px; } .help { width: 65px; margin: 0 48px 0 46px; } .how { width: 190px; margin-left: 47px; letter-spacing: -.4px; }
.columns { display: flex; font-family: "Noto Sans CJK JP", sans-serif; font-size: 28.750px; line-height: 40px; }
main { width: 1204px; margin-left: 440px; padding-top: 51.500px; }
.crumbs { display: flex; margin-left: -1px; color: #8e8e8e; white-space: nowrap; }
.crumbs b { font-weight: 400; padding: 0 12px; }
h1 { margin: 32px 0 0 -6px; font: 400 104px/110px Lato, sans-serif; color: #ff4f5a; -webkit-text-stroke: 1.500px #ff4f5a; letter-spacing: -5.500px; word-spacing: 23px; white-space: nowrap; }
.tagline { margin-top: 28px; font: 300 38.800px/48px Lato, sans-serif; color: #989898; letter-spacing: .5px; }
.contact { display: flex; justify-content: space-between; margin-top: 50px; padding-left: 22px; }
.contact div { display: flex; align-items: center; gap: 9px; }
.card { background: #fff; border: 2px solid #ebebeb; border-radius: 8px; }
.about { height: 763px; margin-top: 117.500px; padding: 47px 60px 0 59px; }
h2 { font-size: 36px; line-height: 60px; font-style: italic; font-weight: 700; text-align: center; white-space: nowrap; letter-spacing: -.62px; }
.second { letter-spacing: -.45px; }
.about p { margin-top: 78.500px; line-height: 54px; white-space: nowrap; }
aside { width: 703px; margin: 79px 0 0 90.500px; }
.place { height: 680px; padding: 40px 39px; }
.map { position: relative; width: 620px; height: 400px; }
.map > svg { overflow: hidden; }
.geo path, .geo circle, .geo use { vector-effect: non-scaling-stroke; }
.streets text, .city, .water, .route { font-family: Roboto, sans-serif; paint-order: stroke; }
.streets text { font-size: 20px; fill: #6a6a6a; stroke: #f4f4f4; stroke-width: 4px; }
.city { font-size: 31px; font-weight: 500; fill: #5c4a1f; stroke: #f4f4f4; stroke-width: 4px; }
.water { font-size: 22px; font-style: italic; fill: #4d80cb; }
.route { font-size: 18px; fill: #222; }
.pin { filter: drop-shadow(0 2px 2px rgba(0,0,0,.35)); }
.zoomer { position: absolute; left: 40px; top: 40px; width: 42px; height: 84px; display: flex; flex-direction: column; align-items: center; padding-left: 3px; background: #fff; border-radius: 6px; box-shadow: 0 2px 6px rgba(0,0,0,.5); font: 700 33px/42px "Liberation Sans", sans-serif; color: #3b3b3b; }
.zoomer i { width: 24px; height: 2px; margin-left: 7px; background: #ddd; }
.zoomer b:last-child { line-height: 36px; transform: scaleX(1.3); }
.address { margin-top: 54.500px; margin-left: 1px; white-space: nowrap; }
.directions { display: flex; align-items: center; gap: 9px; margin: 58px 0 0 2px; color: #8e8e8e; }
.directions svg { margin-top: -6px; }
.cats { height: 620px; margin-top: 80px; padding: 49px 0 0 47px; font-size: 32.400px; white-space: nowrap; }
.cats div { display: flex; align-items: center; gap: 19px; margin-bottom: 60px; }
.cats i { display: grid; place-items: center; width: 100px; height: 100px; border: 4px solid #ff4f5a; border-radius: 50%; }

.dock { position: relative; flex: none; display: flex; width: 2742px; height: 104px; margin-left: 69px; padding-left: 4.500px; border-radius: 12px 12px 0 0; background: linear-gradient(90deg, #5d5755, #5c5251 20%, #5c5454 40%, #5d5a5f 56%, #656c7e 66%, #686b7b 71%, #8e665e 75%, #b56a50 79%, #b96a50 82%, #a2695b 87%, #8b6861 92%, #6b6d7c); box-shadow: 0 0 50px rgba(0,0,0,.28), 0 -1px 0 #777; }
.app { position: relative; width: 86.880px; display: flex; justify-content: center; padding-top: 9px; }
.app svg { width: 80px; height: 80px; }
.app.run::after { content: ""; position: absolute; top: 92px; left: 39px; width: 8px; height: 8px; border-radius: 50%; background: #090909; }
.divider { width: 2px; height: 76px; margin: 14px 17px 0 20px; background: #754d40; }
.divider ~ .app { width: 86.400px; }
```
